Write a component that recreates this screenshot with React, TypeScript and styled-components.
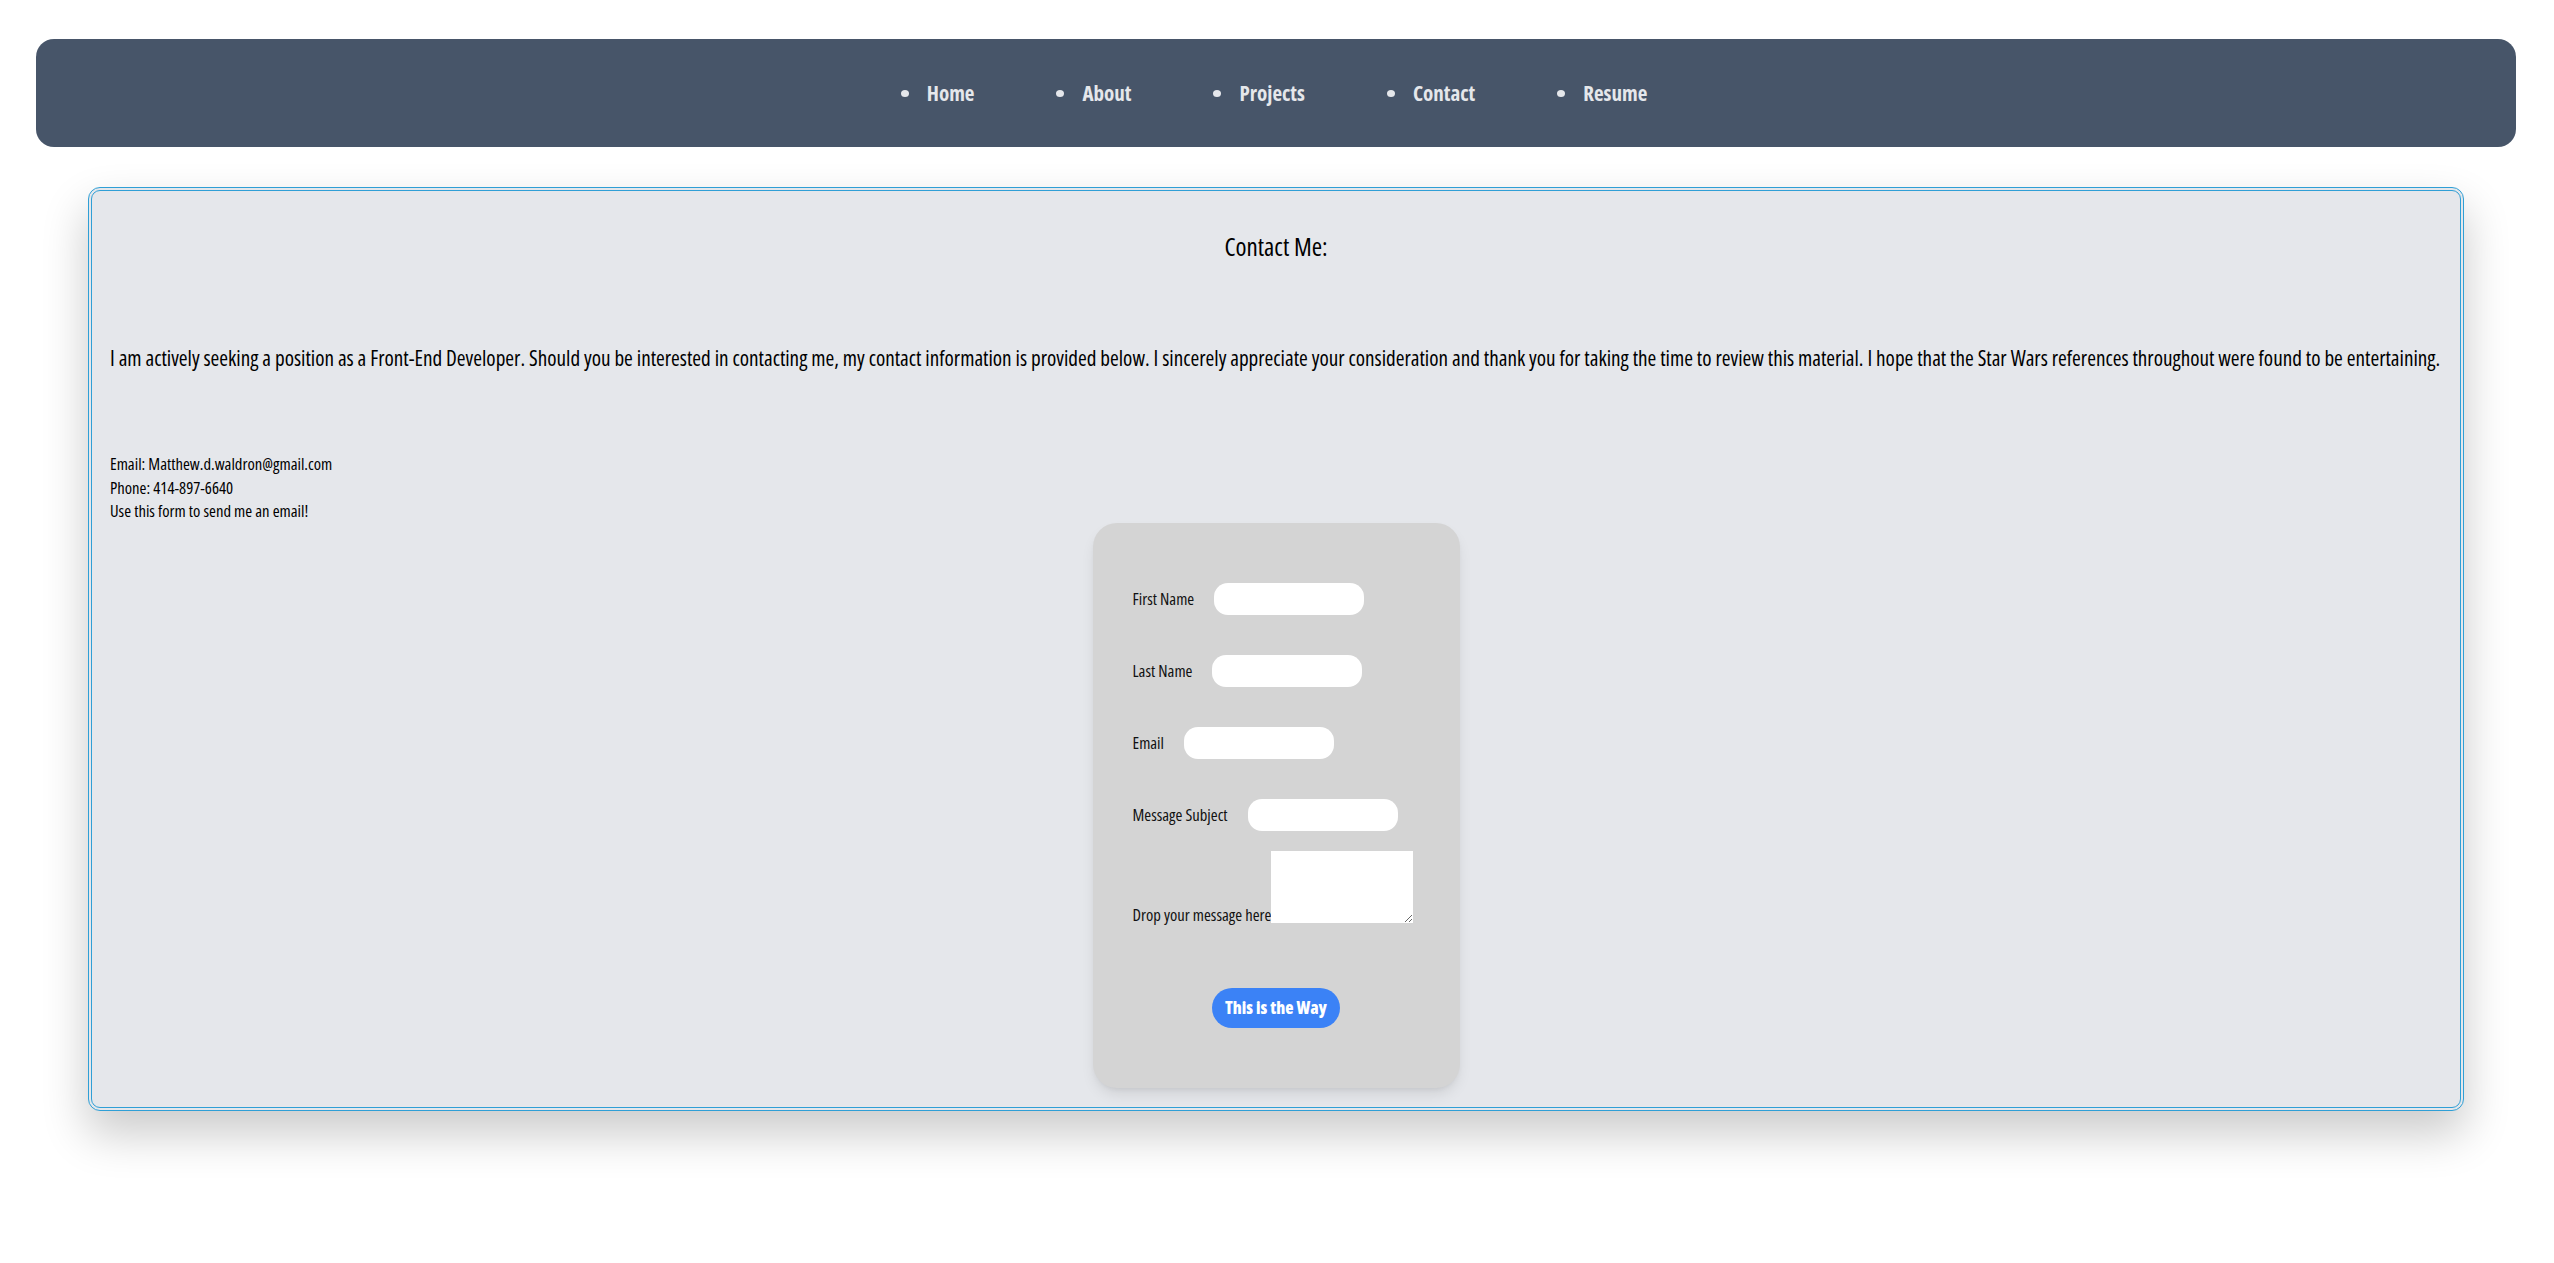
import React from "react";
import styled, { createGlobalStyle } from "styled-components";

const GlobalStyle = createGlobalStyle`
  html, body {
    margin: 0;
    padding: 0;
    background: #ffffff;
  }
  body {
    font-family: "Open Sans", "Roboto Condensed", sans-serif;
    font-stretch: 75%;
    font-weight: 500;
    color: #111111;
  }
  * { box-sizing: border-box; }
`;

const Page = styled.div`
  padding: 39px 38px 120px 36px;
`;

const NavBar = styled.nav`
  height: 108px;
  background: #475569;
  border-radius: 18px;
  display: flex;
  align-items: center;
  justify-content: center;
`;

const NavList = styled.ul`
  list-style: none;
  margin: 0;
  padding: 0 4px 0 0;
  display: flex;
  align-items: center;
  gap: 82px;
`;

const NavItem = styled.li`
  display: flex;
  align-items: center;
  gap: 18px;
`;

const Bullet = styled.span`
  width: 8px;
  height: 7px;
  border-radius: 50%;
  background: #e5e7eb;
  flex: none;
`;

const NavLink = styled.a`
  color: #e5e7eb;
  font-size: 21px;
  font-weight: 700;
  text-decoration: none;
  line-height: 28px;
`;

const Card = styled.section`
  margin: 40px 52px 0 52px;
  border: 4px double #2f9fd6;
  border-radius: 12px;
  background: #e5e7eb;
  padding: 38px 18px 19px 18px;
  box-shadow: 0 22px 45px 2px rgba(0, 0, 0, 0.2);
`;

const Heading = styled.h2`
  margin: 0;
  text-align: center;
  font-size: 25px;
  font-weight: 500;
  line-height: normal;
  color: #000000;
`;

const Intro = styled.p`
  margin: 80px 0 0 0;
  font-size: 21.15px;
  line-height: normal;
  white-space: nowrap;
  color: #000000;
`;

const ContactLines = styled.div`
  margin-top: 80px;
  display: flex;
  flex-direction: column;
`;

const Line = styled.span`
  font-size: 16.65px;
  line-height: 23.5px;
  color: #000000;
`;

const FormCard = styled.form`
  width: 367px;
  margin: 0 auto;
  background: #d4d4d4;
  border-radius: 24px;
  padding: 60px 40px 60px 40px;
  box-shadow: 0 8px 16px -4px rgba(0, 0, 0, 0.12), 0 3px 6px -3px rgba(0, 0, 0, 0.08);
  display: flex;
  flex-direction: column;
`;

const Field = styled.div`
  display: flex;
  align-items: center;
  gap: 20px;
  height: 32px;
  margin-bottom: 40px;

  &:nth-of-type(4) {
    margin-bottom: 20px;
  }
`;

const Label = styled.label`
  font-size: 16.6px;
  color: #111111;
  white-space: nowrap;
`;

const TextInput = styled.input`
  width: 150px;
  height: 32px;
  border: none;
  border-radius: 14px;
  background: #ffffff;
  outline: none;
  padding: 0 10px;
  font-family: inherit;
`;

const MessageField = styled.div`
  display: flex;
  align-items: flex-end;
`;

const MessageLabel = styled(Label)`
  line-height: 17px;
`;

const MessageArea = styled.textarea`
  width: 142px;
  height: 72px;
  border: none;
  border-radius: 0;
  background: #ffffff;
  outline: none;
  margin: 0;
  padding: 2px;
  font-family: inherit;
  display: block;
`;

const SubmitButton = styled.button`
  align-self: center;
  margin-top: 65px;
  width: 128px;
  height: 40px;
  border: none;
  border-radius: 9999px;
  background: #3b82f6;
  color: #ffffff;
  font-family: inherit;
  font-stretch: 75%;
  font-size: 17px;
  font-weight: 800;
  cursor: pointer;
`;

const navItems = ["Home", "About", "Projects", "Contact", "Resume"];

const fields = [
  { id: "firstName", label: "First Name" },
  { id: "lastName", label: "Last Name" },
  { id: "email", label: "Email" },
  { id: "subject", label: "Message Subject" },
];

export default function App() {
  return (
    <>
      <GlobalStyle />
      <Page>
        <NavBar>
          <NavList>
            {navItems.map((item) => (
              <NavItem key={item}>
                <Bullet />
                <NavLink href="#">{item}</NavLink>
              </NavItem>
            ))}
          </NavList>
        </NavBar>

        <Card>
          <Heading>Contact Me:</Heading>
          <Intro>
            I am actively seeking a position as a Front-End Developer. Should you be interested in
            contacting me, my contact information is provided below. I sincerely appreciate your
            consideration and thank you for taking the time to review this material. I hope that the
            Star Wars references throughout were found to be entertaining.
          </Intro>
          <ContactLines>
            <Line>Email: Matthew.d.waldron@gmail.com</Line>
            <Line>Phone: 414-897-6640</Line>
            <Line>Use this form to send me an email!</Line>
          </ContactLines>

          <FormCard onSubmit={(e) => e.preventDefault()}>
            {fields.map((f) => (
              <Field key={f.id}>
                <Label htmlFor={f.id}>{f.label}</Label>
                <TextInput id={f.id} type="text" />
              </Field>
            ))}
            <MessageField>
              <MessageLabel htmlFor="message">Drop your message here</MessageLabel>
              <MessageArea id="message" />
            </MessageField>
            <SubmitButton type="submit">This is the Way</SubmitButton>
          </FormCard>
        </Card>
      </Page>
    </>
  );
}
